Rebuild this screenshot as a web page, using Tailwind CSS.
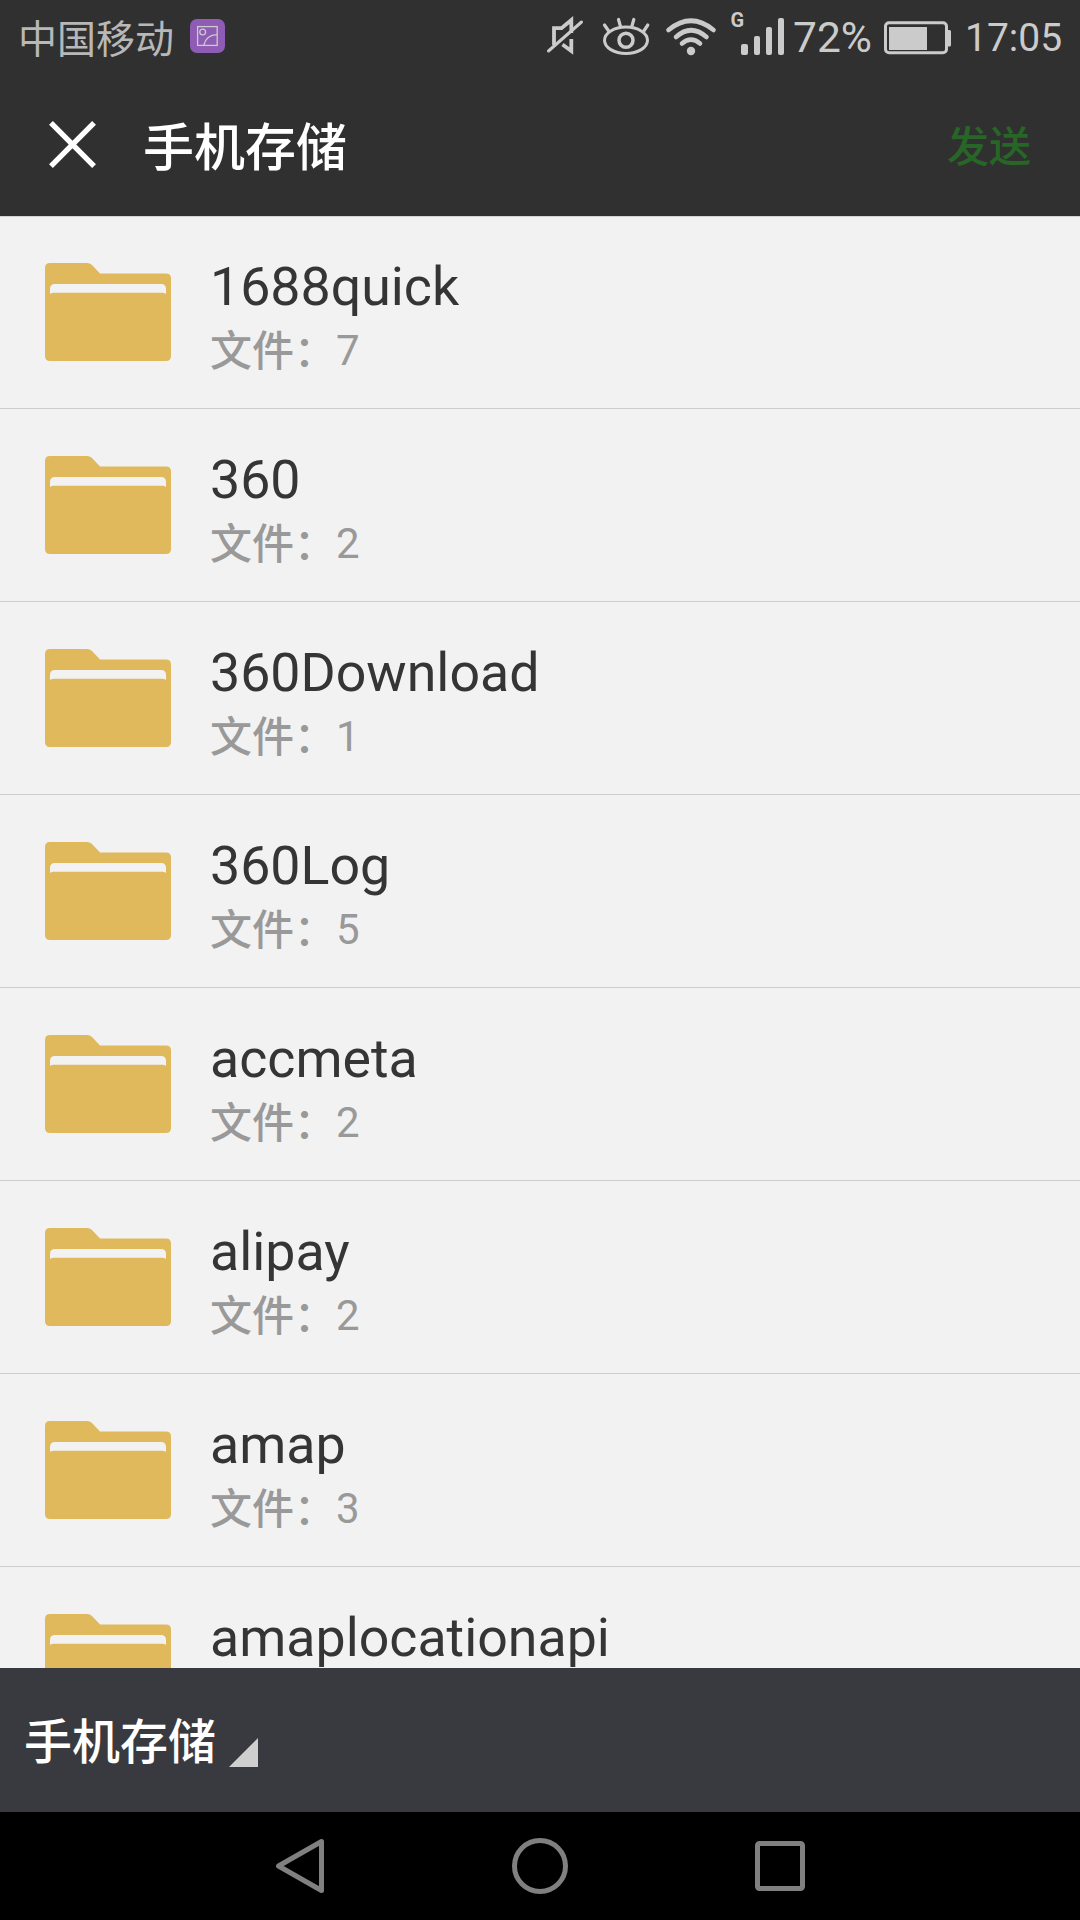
<!DOCTYPE html>
<html lang="zh-CN">
<head>
<meta charset="utf-8">
<title>手机存储</title>
<script src="https://cdn.jsdelivr.net/npm/@tailwindcss/browser@4"></script>
</head>
<body class="bg-black">
<div class="w-[1080px] h-[1920px] overflow-hidden flex flex-col font-['Roboto','Noto_Sans_CJK_SC',sans-serif]">
  <header class="h-[216px] shrink-0 bg-[#303030] flex flex-col">
    <div class="h-[72px] flex items-center pl-[18px] text-[#cbcbcb]">
      <span class="text-[39px] leading-[72px] h-[72px] w-[172px] whitespace-nowrap text-[#b8b8b8] pt-[4px]">中国移动</span>
      <svg class="w-[35px] h-[34px] shrink-0" viewBox="0 0 35 34" fill="none"><rect width="35" height="34" rx="7" fill="#8e5bb5"/><g stroke="#cbcbcb" stroke-width="1.3"><rect x="7.6" y="7.6" width="19.6" height="18.8"/><circle cx="12.7" cy="13" r="2.9"/><path d="M13.7 26.4C15 20.500 19.500 16 27.200 15.700"/></g></svg>
      <svg class="w-[263px] h-[72px] shrink-0 ml-[305px]" viewBox="530 0 263 72" fill="none" stroke="#cbcbcb">
        <path d="M554 45V28.200H561.500L571.300 20V33M571.300 39V51L562.500 44.500" stroke-width="3.800"/>
        <path d="M548.500 51L581.500 22" stroke-width="3" stroke-linecap="round"/>
        <ellipse cx="626" cy="40.300" rx="21.500" ry="13.200" stroke-width="3"/>
        <circle cx="626" cy="40.300" r="7" stroke-width="3.500"/>
        <path d="M604.500 25L609 31.500M618.500 19.500L620.500 26.500M633.800 19.500L631.800 26.500M647.800 25L643.500 31.500" stroke-width="3.200" stroke-linecap="round"/>
        <g stroke-width="4.600" stroke-linecap="round"><path d="M668.500 30Q691 11.500 713.500 30M676 37Q691 23.500 706.500 37M682 43.500Q691 35.800 700 43.500"/></g>
        <circle cx="691" cy="51" r="4.200" fill="#cbcbcb" stroke="none"/>
        <g fill="#cbcbcb" stroke="none"><rect x="741" y="44" width="7" height="11" rx="2"/><rect x="754" y="36" width="6" height="19" rx="2"/><rect x="766" y="27" width="6" height="28" rx="2"/><rect x="778" y="18" width="6" height="37" rx="2"/>
        <text x="730.500" y="26.700" font-size="20" font-weight="700">G</text></g>
      </svg>
      <span class="text-[42.500px] leading-[72px] h-[72px] w-[91px] pt-[2px] whitespace-nowrap shrink-0">72%</span>
      <svg class="w-[67px] h-[34px] mt-[3px] shrink-0" viewBox="0 0 67 34" fill="none"><rect x="1.500" y="1.700" width="61" height="30" rx="3.500" stroke="#cbcbcb" stroke-width="3"/><path d="M5 6H43V29H5ZM64 9H65.500Q67 9 67 10.500V24Q67 25.500 65.500 25.500H64Z" fill="#cbcbcb"/></svg>
      <span class="text-[39px] leading-[72px] h-[72px] pl-[14px] pt-[2px] whitespace-nowrap">17:05</span>
    </div>
    <div class="h-[144px] flex items-center pl-[49px] pr-[49px]">
      <svg class="w-[47px] h-[47px] mt-[1px]" viewBox="0 0 48 48"><path d="M2 2L46 46M46 2L2 46" stroke="#fff" stroke-width="5.500"/></svg>
      <h1 class="pl-[47px] pt-[9px] text-[51px] leading-[135px] font-medium text-white grow">手机存储</h1>
      <button class="pt-[7px] text-[42px] leading-[137px] font-medium text-[#286628]">发送</button>
    </div>
  </header>

  <main id="list" class="h-[1452px] shrink-0 overflow-hidden bg-[#f2f2f2] shadow-[inset_0_1px_0_#d2d2d2]"></main>

  <div class="h-[144px] shrink-0 bg-[#393a3f] flex pl-[24px] items-center">
    <span class="pt-[6px] text-[48px] leading-[138px] font-medium text-white">手机存储</span>
    <svg class="w-[29px] h-[29px] ml-[13px] mt-[25px]" viewBox="0 0 30 30"><path d="M30 0V30H0Z" fill="#cfcfcf"/></svg>
  </div>

  <nav class="h-[108px] shrink-0 bg-black flex items-center justify-between px-[270px]">
    <svg class="w-[60px] h-[60px]" viewBox="270 1836 60 60" fill="none" stroke="#808080" stroke-width="5" stroke-linejoin="round"><path d="M278.500 1866L321.500 1841.500V1890.500Z"/></svg>
    <svg class="w-[60px] h-[60px]" viewBox="510 1836 60 60" fill="none" stroke="#808080" stroke-width="5"><circle cx="540" cy="1866" r="25.500"/></svg>
    <svg class="w-[60px] h-[60px]" viewBox="750 1836 60 60" fill="none" stroke="#808080" stroke-width="5"><rect x="757.500" y="1843.500" width="45" height="45" rx="2"/></svg>
  </nav>
</div>

<template id="row">
  <div class="h-[193px] border-b border-[#cdcdcd] flex pl-[45px]">
    <svg class="w-[126px] h-[98px] mt-[47px] shrink-0" viewBox="0 0 126 98"><path d="M5 0H42Q45 0 47 2L55 10.500H121Q126 10.500 126 15.500V93Q126 98 121 98H5Q0 98 0 93V5Q0 0 5 0Z" fill="#e0b95d"/><path d="M5 31V26Q5 21 10 21H116Q121 21 121 26V31Q119.500 29.700 117 29.700H9Q6.500 29.700 5 31Z" fill="#f2f2f2"/></svg>
    <div class="pl-[39px] pt-[39px] flex flex-col">
      <span data-name class="text-[53.700px] leading-[64px] h-[64px] text-[#353535] whitespace-nowrap"></span>
      <span class="pt-[1px] text-[42px] leading-[62px] h-[62px] text-[#999999] whitespace-nowrap"><span class="font-medium relative top-px">文件：</span><span data-count></span></span>
    </div>
  </div>
</template>
<script>
  const folders = [["1688quick", 7], ["360", 2], ["360Download", 1], ["360Log", 5], ["accmeta", 2], ["alipay", 2], ["amap", 3], ["amaplocationapi", 1]];
  const list = document.getElementById("list");
  for (const [name, count] of folders) {
    const row = document.getElementById("row").content.cloneNode(true);
    row.querySelector("[data-name]").textContent = name;
    row.querySelector("[data-count]").textContent = count;
    list.append(row);
  }
</script>
</body>
</html>
